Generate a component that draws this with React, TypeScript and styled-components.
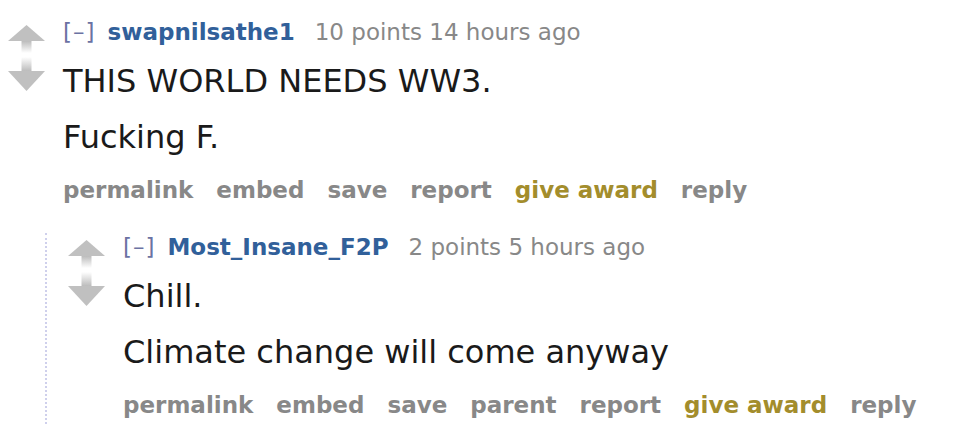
import styled, { createGlobalStyle } from 'styled-components';

interface IComment {
	author: string;
	score: number;
	age: string;
	paragraphs: string[];
	actions: string[];
	children?: IComment[];
}

const thread: IComment = {
	author: 'swapnilsathe1',
	score: 10,
	age: '14 hours ago',
	paragraphs: ['THIS WORLD NEEDS WW3.', 'Fucking F.'],
	actions: ['permalink', 'embed', 'save', 'report', 'give award', 'reply'],
	children: [
		{
			author: 'Most_Insane_F2P',
			score: 2,
			age: '5 hours ago',
			paragraphs: ['Chill.', 'Climate change will come anyway'],
			actions: ['permalink', 'embed', 'save', 'parent', 'report', 'give award', 'reply'],
		},
	],
};

const VoteArrows = () => (
	<svg width='37' height='66' viewBox='0 0 37 66'>
		<defs>
			<linearGradient id='fadeDown' x1='0' y1='0' x2='0' y2='1'>
				<stop offset='0' stopColor='#bcbcbc' />
				<stop offset='1' stopColor='#ffffff' />
			</linearGradient>
			<linearGradient id='fadeUp' x1='0' y1='0' x2='0' y2='1'>
				<stop offset='0' stopColor='#ffffff' />
				<stop offset='1' stopColor='#bcbcbc' />
			</linearGradient>
		</defs>
		<polygon points='18.5,0 37,16 0,16' fill='#c0c0c0' />
		<rect x='13.5' y='16' width='10' height='12' fill='url(#fadeDown)' />
		<rect x='13.5' y='32' width='10' height='14' fill='url(#fadeUp)' />
		<polygon points='0,46 37,46 18.5,66' fill='#c0c0c0' />
	</svg>
);

const Comment = ({ comment }: { comment: IComment }) => {
	return (
		<Container>
			<Row>
				<Midcol>
					<VoteArrows />
				</Midcol>
				<Entry>
					<Tagline>
						<Expand>[–]</Expand>
						<Author>{comment.author}</Author>
						<Score>
							{comment.score} points {comment.age}
						</Score>
					</Tagline>
					<UserText>
						{comment.paragraphs.map((p) => (
							<p key={p}>{p}</p>
						))}
					</UserText>
					<Buttons>
						{comment.actions.map((a) => (
							<Action key={a} $gold={a === 'give award'}>
								{a}
							</Action>
						))}
					</Buttons>
				</Entry>
			</Row>
			{comment.children && (
				<Children>
					{comment.children.map((c) => (
						<Comment key={c.author} comment={c} />
					))}
				</Children>
			)}
		</Container>
	);
};

export default function App() {
	return (
		<>
			<GlobalStyle />
			<Page>
				<Comment comment={thread} />
			</Page>
		</>
	);
}

const GlobalStyle = createGlobalStyle`
	body {
		margin: 0;
		background: #fff;
		font-family: 'DejaVu Sans', Verdana, sans-serif;
	}
`;

const Page = styled.div`
	padding: 18px 0 0 8px;
	width: 980px;
	height: 441px;
	box-sizing: border-box;
	overflow: hidden;
`;

const Container = styled.div`
	display: flex;
	flex-direction: column;
`;

const Row = styled.div`
	display: flex;
`;

const Midcol = styled.div`
	width: 55px;
	flex-shrink: 0;
	padding-top: 7px;

	> svg {
		display: block;
	}
`;

const Entry = styled.div`
	display: flex;
	flex-direction: column;
`;

const Tagline = styled.div`
	font-size: 23px;
	line-height: 28px;
	color: #888;
	white-space: nowrap;
`;

const Expand = styled.span`
	color: #6b72a3;
	margin-right: 12px;
	letter-spacing: 1px;
`;

const Author = styled.span`
	color: #31609a;
	font-weight: 700;
	margin-right: 20px;
`;

const Score = styled.span``;

const UserText = styled.div`
	display: flex;
	flex-direction: column;
	gap: 16px;
	margin-top: 15px;

	> p {
		margin: 0;
		font-size: 32px;
		line-height: 40px;
		color: #1a1a1a;
		white-space: nowrap;
	}
`;

const Buttons = styled.div`
	display: flex;
	gap: 23px;
	margin-top: 19px;
`;

const Action = styled.span<{ $gold?: boolean }>`
	font-size: 23px;
	line-height: 28px;
	font-weight: 700;
	color: ${({ $gold }) => ($gold ? '#a38d2c' : '#888')};
	white-space: nowrap;
`;

const Children = styled.div`
	margin: 29px 0 0 37px;
	padding: 0 0 5px 21px;
	border-left: 2px dotted #cfd0ec;
`;
